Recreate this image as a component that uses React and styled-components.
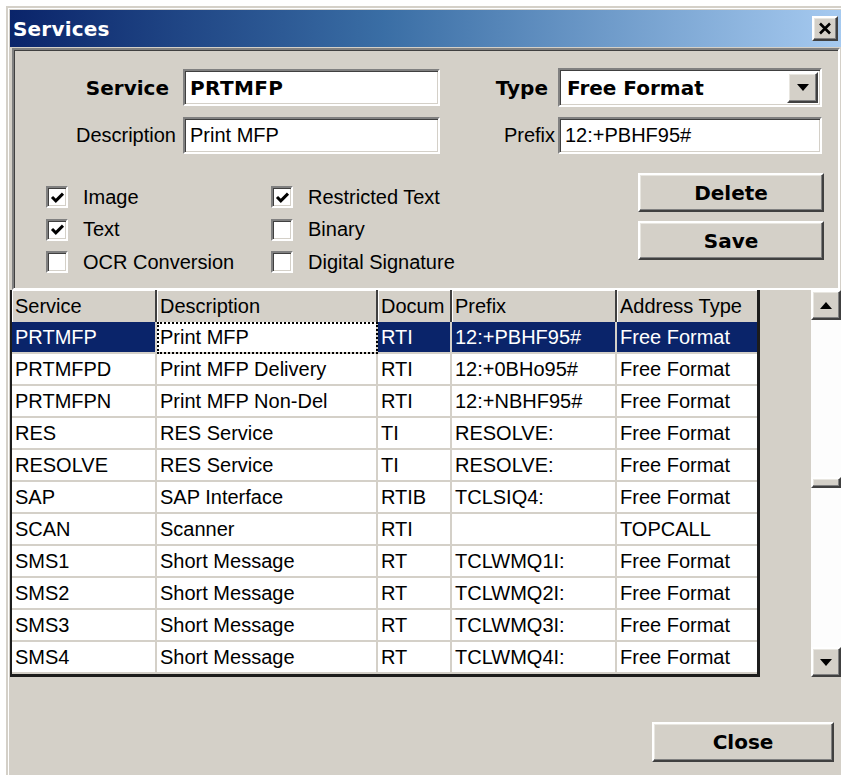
import React from 'react'
import styled, { createGlobalStyle } from 'styled-components'

const regular = '"Liberation Sans", Arial, sans-serif'
const heavy = '"DejaVu Sans", Verdana, sans-serif'

const columns = ['Service', 'Description', 'Docum', 'Prefix', 'Address Type']

const services = [
  ['PRTMFP', 'Print MFP', 'RTI', '12:+PBHF95#', 'Free Format'],
  ['PRTMFPD', 'Print MFP Delivery', 'RTI', '12:+0BHo95#', 'Free Format'],
  ['PRTMFPN', 'Print MFP Non-Del', 'RTI', '12:+NBHF95#', 'Free Format'],
  ['RES', 'RES Service', 'TI', 'RESOLVE:', 'Free Format'],
  ['RESOLVE', 'RES Service', 'TI', 'RESOLVE:', 'Free Format'],
  ['SAP', 'SAP Interface', 'RTIB', 'TCLSIQ4:', 'Free Format'],
  ['SCAN', 'Scanner', 'RTI', '', 'TOPCALL'],
  ['SMS1', 'Short Message', 'RT', 'TCLWMQ1I:', 'Free Format'],
  ['SMS2', 'Short Message', 'RT', 'TCLWMQ2I:', 'Free Format'],
  ['SMS3', 'Short Message', 'RT', 'TCLWMQ3I:', 'Free Format'],
  ['SMS4', 'Short Message', 'RT', 'TCLWMQ4I:', 'Free Format'],
]

const options = [
  ['Image', true], ['Restricted Text', true],
  ['Text', true], ['Binary', false],
  ['OCR Conversion', false], ['Digital Signature', false],
]

function App() {
  return (
    <>
      <GlobalStyle />
      <Window>
        <TitleBar>
          <Title>Services</Title>
          <TitleClose>
            <svg width="14" height="13" viewBox="0 0 14 13">
              <path d="M2 1.5 L12 11.5 M12 1.5 L2 11.5" stroke="#000" strokeWidth="2.6" />
            </svg>
          </TitleClose>
        </TitleBar>

        <Panel>
          <Fields>
            <Label $bold $gap={14}>Service</Label>
            <TextBox $bold>PRTMFP</TextBox>
            <Label $bold $gap={10}>Type</Label>
            <Select>
              <SelectValue>Free Format</SelectValue>
              <DropButton>
                <svg width="12" height="7" viewBox="0 0 12 7"><path d="M0 0 H12 L6 7 Z" fill="#000" /></svg>
              </DropButton>
            </Select>
            <Label $gap={7}>Description</Label>
            <TextBox>Print MFP</TextBox>
            <Label $gap={3}>Prefix</Label>
            <TextBox>12:+PBHF95#</TextBox>
          </Fields>

          <Lower>
            <Checks>
              {options.map(([name, on]) => (
                <Check key={name}>
                  <Box>
                    {on && (
                      <svg width="15" height="13" viewBox="0 0 15 13">
                        <path d="M2 6 L5.8 9.8 L13 2.6" stroke="#000" strokeWidth="3" fill="none" />
                      </svg>
                    )}
                  </Box>
                  {name}
                </Check>
              ))}
            </Checks>
            <ButtonStack>
              <Button>Delete</Button>
              <Button>Save</Button>
            </ButtonStack>
          </Lower>
        </Panel>

        <TableArea>
          <Grid>
            {columns.map((c, i) => (
              <HeadCell key={c} $last={i === columns.length - 1}>{c}</HeadCell>
            ))}
            {services.map((row, r) =>
              row.map((value, c) => (
                <Cell
                  key={r + '-' + c}
                  $selected={r === 0 && c !== 1}
                  $focus={r === 0 && c === 1}
                  $last={c === row.length - 1}
                >
                  {value}
                </Cell>
              ))
            )}
          </Grid>

          <ScrollBar>
            <ScrollButton>
              <svg width="12" height="7" viewBox="0 0 12 7"><path d="M0 7 H12 L6 0 Z" fill="#000" /></svg>
            </ScrollButton>
            <Track>
              <Thumb />
            </Track>
            <ScrollButton>
              <svg width="12" height="7" viewBox="0 0 12 7"><path d="M0 0 H12 L6 7 Z" fill="#000" /></svg>
            </ScrollButton>
          </ScrollBar>
        </TableArea>

        <Footer>
          <Button $wide>Close</Button>
        </Footer>
      </Window>
    </>
  )
}

const GlobalStyle = createGlobalStyle`
  html, body {
    margin: 0;
    background: #ffffff;
    overflow: hidden;
  }
  body {
    font-family: ${regular};
    font-size: 20px;
    color: #000;
  }
`

// classic 3D edges
const raised = `
  background: #d4d0c8;
  border: 2px solid;
  border-color: #ffffff #404040 #404040 #ffffff;
  box-shadow: inset -1px -1px #808080, inset 1px 1px #e8e6e0;
`

const sunken = `
  border: 2px solid;
  border-color: #808080 #ffffff #ffffff #808080;
  box-shadow: inset 1px 1px #404040, inset -1px -1px #d4d0c8;
`

const Window = styled.div`
  box-sizing: border-box;
  width: 840px;
  margin: 6px 0 0 6px;
  padding: 2px;
  background: #d4d0c8;
  border: 2px solid;
  border-color: #d4d0c8 #404040 #404040 #d4d0c8;
  box-shadow: inset 1px 1px #ffffff;
  display: flex;
  flex-direction: column;
`

const TitleBar = styled.div`
  height: 37px;
  display: flex;
  align-items: center;
  justify-content: space-between;
  padding: 0 4px 0 3px;
  background: linear-gradient(90deg, #0a246a 0%, #3a6ea5 45%, #a6caf0 100%);
`

const Title = styled.span`
  font-family: ${heavy};
  font-weight: bold;
  font-size: 20px;
  color: #ffffff;
  letter-spacing: 0.2px;
`

const TitleClose = styled.div`
  ${raised}
  box-sizing: border-box;
  width: 26px;
  height: 25px;
  display: flex;
  align-items: center;
  justify-content: center;
`

const Panel = styled.div`
  ${sunken}
  box-sizing: border-box;
  height: 242px;
  margin: 1px 2px 0 2px;
  padding-top: 19px;
  display: flex;
  flex-direction: column;
`

const Fields = styled.div`
  display: grid;
  grid-template-columns: 169px 257px 118px 264px;
  grid-auto-rows: 37px;
  row-gap: 11px;
`

const Label = styled.div`
  display: flex;
  align-items: center;
  justify-content: flex-end;
  padding-right: ${(p) => p.$gap}px;
  font-family: ${(p) => (p.$bold ? heavy : regular)};
  font-weight: ${(p) => (p.$bold ? 'bold' : 'normal')};
  white-space: nowrap;
`

const TextBox = styled.div`
  ${sunken}
  box-sizing: border-box;
  background: #ffffff;
  display: flex;
  align-items: center;
  padding-left: 5px;
  font-family: ${(p) => (p.$bold ? heavy : regular)};
  font-weight: ${(p) => (p.$bold ? 'bold' : 'normal')};
  letter-spacing: ${(p) => (p.$bold ? '0.4px' : '0')};
`

const Select = styled(TextBox)`
  justify-content: space-between;
  padding: 0 2px 0 7px;
  height: 39px;
  margin-top: -1px;
`

const SelectValue = styled.span`
  font-family: ${heavy};
  font-weight: bold;
`

const DropButton = styled.div`
  ${raised}
  box-sizing: border-box;
  width: 31px;
  height: 31px;
  display: flex;
  align-items: center;
  justify-content: center;
`

const Lower = styled.div`
  display: flex;
  align-items: flex-start;
  margin-top: 19px;
  padding-left: 32px;
`

const Checks = styled.div`
  display: grid;
  grid-template-columns: 225px 240px;
  grid-auto-rows: 32.5px;
  margin-top: 8px;
`

const Check = styled.label`
  display: flex;
  align-items: center;
  gap: 15px;
  white-space: nowrap;
`

const Box = styled.span`
  ${sunken}
  box-sizing: border-box;
  width: 22px;
  height: 22px;
  background: #ffffff;
  display: flex;
  align-items: center;
  justify-content: center;
`

const ButtonStack = styled.div`
  display: flex;
  flex-direction: column;
  gap: 9px;
  margin-left: auto;
  margin-right: 14px;
`

const Button = styled.div`
  ${raised}
  box-sizing: border-box;
  width: ${(p) => (p.$wide ? 182 : 186)}px;
  height: ${(p) => (p.$wide ? 40 : 39)}px;
  display: flex;
  align-items: center;
  justify-content: center;
  font-family: ${heavy};
  font-weight: bold;
  font-size: 20px;
`

const TableArea = styled.div`
  display: flex;
  align-items: stretch;
  gap: 51px;
`

const Grid = styled.div`
  display: grid;
  grid-template-columns: 145px 221px 74px 165px 140px;
  grid-auto-rows: 32px;
  background: #ffffff;
  border-left: 2px solid #1c1c1c;
  border-right: 3px solid #1c1c1c;
  border-bottom: 3px solid #1c1c1c;
`

const HeadCell = styled.div`
  box-sizing: border-box;
  background: #d4d0c8;
  box-shadow: inset 1px 1px #ffffff;
  border-right: ${(p) => (p.$last ? 'none' : '2px solid #404040')};
  padding-left: 3px;
  display: flex;
  align-items: center;
  overflow: hidden;
  white-space: nowrap;
`

const Cell = styled.div`
  box-sizing: border-box;
  background: ${(p) => (p.$selected ? '#0a246a' : '#ffffff')};
  color: ${(p) => (p.$selected ? '#ffffff' : '#000000')};
  border-right: ${(p) => (p.$last ? 'none' : '2px solid #d4d0c8')};
  border-bottom: 2px solid #d4d0c8;
  outline: ${(p) => (p.$focus ? '2px dotted #000' : 'none')};
  outline-offset: -2px;
  padding-left: 3px;
  display: flex;
  align-items: center;
  overflow: hidden;
  white-space: nowrap;
`

const ScrollBar = styled.div`
  width: 30px;
  display: flex;
  flex-direction: column;
`

const ScrollButton = styled.div`
  ${raised}
  box-sizing: border-box;
  height: 30px;
  display: flex;
  align-items: center;
  justify-content: center;
`

const Track = styled.div`
  flex: 1;
  background: #fdfdfd;
  padding-top: 157px;
`

const Thumb = styled.div`
  ${raised}
  box-sizing: border-box;
  height: 11px;
`

const Footer = styled.div`
  height: 96px;
  display: flex;
  justify-content: flex-end;
  align-items: flex-start;
  padding: 45px 8px 0 0;
  box-sizing: border-box;
`

export default App
